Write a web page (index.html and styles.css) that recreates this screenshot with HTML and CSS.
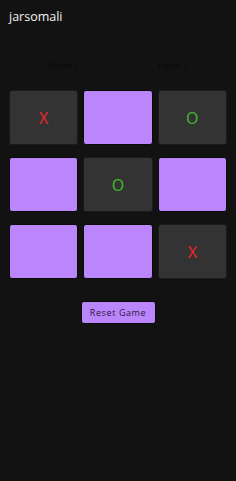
FILE: index.html
```html
<!DOCTYPE html>
<html lang="en">
<head>
    <meta charset="UTF-8">
    <meta name="viewport" content="width=device-width, initial-scale=1.0">
    <title>jarsomali</title>
    <link rel="stylesheet" href="styles.css">
</head>
<body>
    <div class="app">
        <h1 class="title">jarsomali</h1>
        <div class="players">
            <div class="player">Player 1</div>
            <div class="player">Player 2</div>
        </div>
        <div class="board">
            <div class="cell"><span class="mark x">X</span></div>
            <div class="cell filled"></div>
            <div class="cell"><span class="mark o">O</span></div>
            <div class="cell filled"></div>
            <div class="cell"><span class="mark o">O</span></div>
            <div class="cell filled"></div>
            <div class="cell filled"></div>
            <div class="cell filled"></div>
            <div class="cell"><span class="mark x">X</span></div>
        </div>
        <div class="actions">
            <button class="reset-btn">Reset Game</button>
        </div>
    </div>
</body>
</html>
```

FILE: styles.css
```css
body {
    margin: 0;
    background: #121212;
    font-family: "Open Sans", sans-serif;
    height: 100vh;
}
.app {
    padding: 9px 9px 0 9px;
}
.title {
    margin: 0;
    font-size: 12.5px;
    font-weight: normal;
    color: #f2f2f2;
    line-height: 16px;
}
.players {
    display: flex;
    margin-top: 33px;
    height: 14px;
}
.player {
    flex: 1;
    text-align: center;
    font-size: 8px;
    line-height: 14px;
    color: #070707;
}
.board {
    display: grid;
    grid-template-columns: repeat(3, 1fr);
    column-gap: 5px;
    row-gap: 12px;
    margin-top: 18px;
}
.cell {
    height: 55px;
    background: #333333;
    border: 1px solid #1b1b1b;
    border-radius: 3px;
    box-sizing: border-box;
    display: flex;
    justify-content: center;
    align-items: center;
}
.cell.filled {
    background: #bb86fc;
    border-color: #0a0a0a;
}
.mark {
    font-family: "Noto Sans", sans-serif;
    font-size: 16px;
}
.mark.x {
    color: #e8262b;
}
.mark.o {
    color: #3fb62c;
}
.actions {
    display: flex;
    justify-content: center;
    margin-top: 22px;
}
.reset-btn {
    background: #bb86fc;
    color: #2a1840;
    border: 1px solid #0a0a0a;
    border-radius: 3px;
    width: 75px;
    height: 23px;
    font-family: "Open Sans", sans-serif;
    font-size: 9px;
    letter-spacing: 0.6px;
    padding: 0;
}
```
